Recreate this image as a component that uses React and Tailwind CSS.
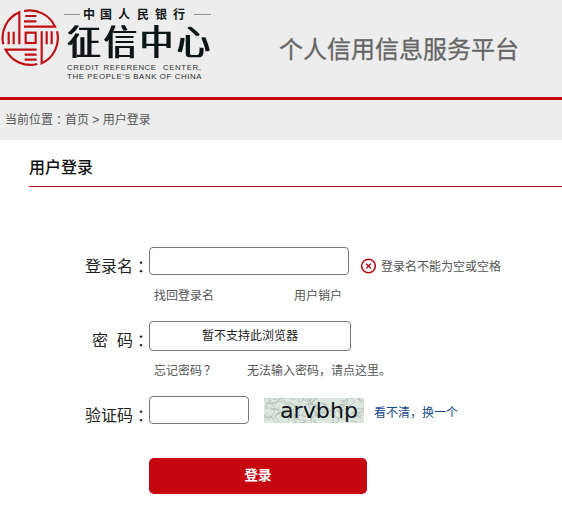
function Emblem() {
  return (
    <svg viewBox="0 0 180 210" className="h-[70px] w-[60px] shrink-0" fill="none" stroke="#c01016" strokeWidth="6.5">
      <rect x="77" y="98" width="30" height="31" />
      <path d="M72 80H165A83 83 0 0 0 72 33M76 48H109M72 64H109" />
      <path d="M58 133V37A83 83 0 0 0 10 133M26 95V133M41 95V133" />
      <path d="M110 149H17A83 83 0 0 0 112 192M74 164H110M74 179H110" />
      <path d="M125 94V190A83 83 0 0 0 171 94M140 94V133M155 94V133" />
    </svg>
  );
}

function Wordmark() {
  return (
    <svg viewBox="60 0 160 90" className="h-[90px] w-[160px] shrink-0" fill="#111718">
      {/* Widens strokes sideways only, for heavy stems and thin bars. */}
      <filter id="stems" x="-5%" y="-5%" width="110%" height="110%">
        <feMorphology operator="dilate" radius="1 0" />
      </filter>
      <path d="M64 14.5H80M194 14.5H211" stroke="#8c9694" />
      <g fontFamily="'Noto Sans CJK SC', sans-serif">
        <text y="19" fontSize="12" fontWeight="700" x="83 100 118 137 155 173">中国人民银行</text>
        <text transform="translate(0 55) scale(1 1.07)" fontSize="33" fontWeight="350" x="67.5 104 140 177" filter="url(#stems)">征信中心</text>
      </g>
      <g fontFamily="'Liberation Sans', Arial, sans-serif" fontSize="7.8" fill="#2a2f30">
        <text x="67" y="70" textLength="32" lengthAdjust="spacing">CREDIT</text>
        <text x="103.5" y="70" textLength="52.5" lengthAdjust="spacing">REFERENCE</text>
        <text x="163" y="70" textLength="38" lengthAdjust="spacing">CENTER,</text>
        <text x="67" y="79" textLength="134.5" lengthAdjust="spacing">THE PEOPLE’S BANK OF CHINA</text>
      </g>
    </svg>
  );
}

// Scratches over the verification code, from a fixed seed.
const scratches = (() => {
  let s = 7411;
  const r = () => (s = (s * 16807) % 2147483647) / 2147483647;
  return Array.from({ length: 150 }, () => {
    const x = r() * 100;
    const y = r() * 25;
    return `M${x.toFixed(1)} ${y.toFixed(1)}l${(r() * 18 - 9).toFixed(1)} ${(r() * 16 - 8).toFixed(1)}`;
  }).join("");
})();

function Captcha() {
  return (
    <svg viewBox="0 0 100 25" className="mt-0.5 ml-[15px] h-[25px] w-[100px] shrink-0">
      <rect width="100" height="25" fill="#dce8df" />
      <path d={scratches} stroke="#a9b4ad" strokeWidth=".7" />
      <text x="16" y="20" fontFamily="'DejaVu Sans', sans-serif" fontSize="20.5" textLength="78" lengthAdjust="spacingAndGlyphs" fill="#10151c">arvbhp</text>
    </svg>
  );
}

function Colon() {
  return <span className="relative top-px font-['Noto_Sans_CJK_TC',sans-serif]" lang="zh-TW">：</span>;
}

function Label({ children }) {
  return (
    <div className="w-[149px] shrink-0 pt-[6px] text-right text-[16px] leading-6 whitespace-pre text-[#222]">
      {children}<Colon />
    </div>
  );
}

export default function App() {
  return (
    <div className="h-[527px] w-[562px] overflow-hidden bg-white font-['Liberation_Sans','Noto_Sans_CJK_SC',sans-serif] text-[12px] text-[#555]" lang="zh-CN">
      <header className="flex h-[100px] border-b-[3px] border-[#c7070f] bg-[#ededed]">
        <Emblem />
        <Wordmark />
        <h1 className="ml-[59px] pt-8 text-[24px] leading-9 whitespace-nowrap text-[#666] [-webkit-text-stroke:0.3px_#666]">个人信用信息服务平台</h1>
      </header>
      <nav className="h-10 bg-[#ededed] pl-[5px] text-[12px] leading-[38px]">
        当前位置<Colon />首页 &gt; 用户登录
      </nav>
      <h2 className="ml-[29px] h-[47px] border-b border-[#c7070f] pt-4 text-[16px] leading-6 font-medium text-[#111]">用户登录</h2>

      <form className="pt-[60px]">
        <div className="flex h-[74px]">
          <Label>登录名</Label>
          <div className="w-[200px]">
            <div className="h-7 rounded-[4px] border border-[#76767e] bg-white" />
            <div className="flex pt-3 pl-[5px] leading-[18px]">
              <a className="w-[140px]">找回登录名</a>
              <a>用户销户</a>
            </div>
          </div>
          <div className="ml-[11px] flex h-10 items-center gap-[5px]">
            <svg viewBox="0 0 16 16" className="-mt-0.5 size-4" fill="none" stroke="#b80d14">
              <circle cx="8.5" cy="8" r="6.8" strokeWidth="1.5" />
              <path d="M6.2 5.7l4.6 4.6M10.8 5.7l-4.6 4.6" strokeWidth="1.4" />
            </svg>
            <span>登录名不能为空或空格</span>
          </div>
        </div>

        <div className="flex h-[75px]">
          <Label>密  码</Label>
          <div>
            <div className="h-[30px] w-[202px] rounded-[4px] border border-[#76767e] text-center leading-7 text-[#222]">暂不支持此浏览器</div>
            <div className="flex pt-[11px] pl-[5px] leading-[18px] whitespace-nowrap">
              <a className="w-[93px]">忘记密码<span className="pl-0.5">？</span></a>
              <a>无法输入密码，请点这里。</a>
            </div>
          </div>
        </div>

        <div className="flex h-[62px]">
          <Label>验证码</Label>
          <div className="h-7 w-[100px] shrink-0 rounded-[4px] border border-[#76767e]" />
          <Captcha />
          <a className="pt-2 pl-[10px] leading-[18px] whitespace-nowrap text-[#174a91]">看不清，换一个</a>
        </div>

        <button type="button" className="ml-[149px] h-9 w-[218px] rounded-[5px] bg-[#c7070f] pt-px text-[13.5px] font-bold text-white">登录</button>
      </form>
    </div>
  );
}
